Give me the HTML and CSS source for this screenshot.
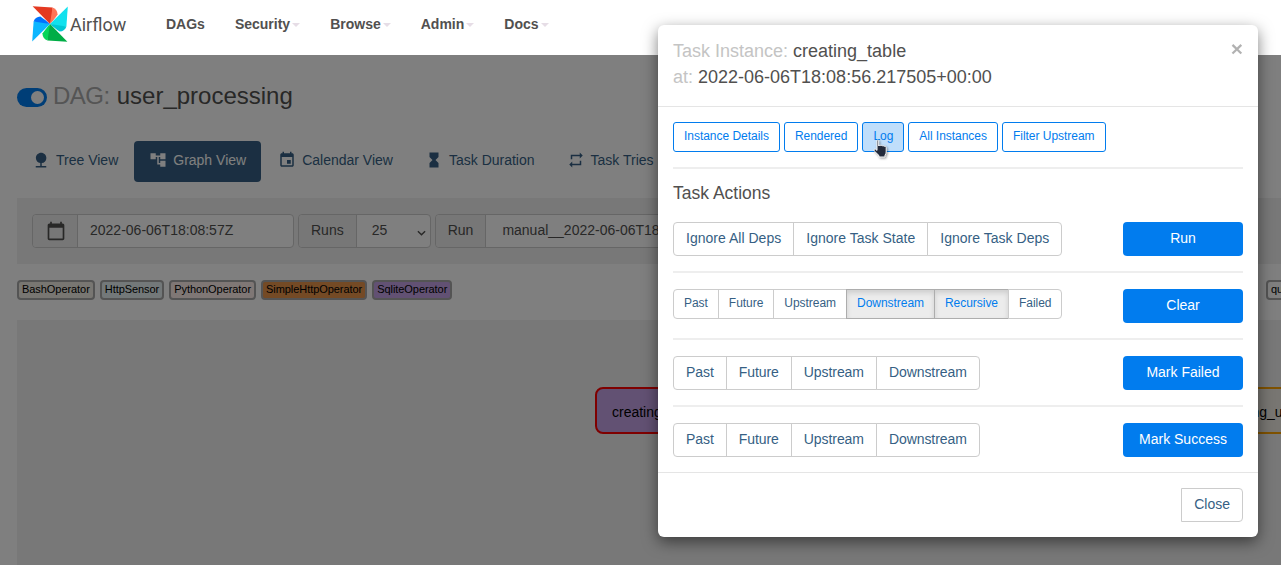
FILE: index.html
```html
<!DOCTYPE html>
<html>
<head>
  <title>Airflow - user_processing</title>
  <link rel="stylesheet" href="styles.css">
</head>
<body>
  <nav class="navbar">
    <a class="brand">
      <svg class="brand-logo" viewBox="0 0 36 36" width="36" height="36">
        <g>
          <path fill="#e43921" d="M18 18L0.6 0.2 20.5 1.6C21.5 6 20 13 18 18z"/>
          <path fill="#ff7557" d="M18 18L20.5 1.6C23.5 2.4 25.4 5 25.6 8.4 23 12 20.5 15.4 18 18z"/>
        </g>
        <g transform="rotate(90 18 18)">
          <path fill="#11e1ee" d="M18 18L0.6 0.2 20.5 1.6C21.5 6 20 13 18 18z"/>
          <path fill="#00c7d4" d="M18 18L20.5 1.6C23.5 2.4 25.4 5 25.6 8.4 23 12 20.5 15.4 18 18z"/>
        </g>
        <g transform="rotate(180 18 18)">
          <path fill="#00ad46" d="M18 18L0.6 0.2 20.5 1.6C21.5 6 20 13 18 18z"/>
          <path fill="#04d659" d="M18 18L20.5 1.6C23.5 2.4 25.4 5 25.6 8.4 23 12 20.5 15.4 18 18z"/>
        </g>
        <g transform="rotate(270 18 18)">
          <path fill="#0cb6ff" d="M18 18L0.6 0.2 20.5 1.6C21.5 6 20 13 18 18z"/>
          <path fill="#0073ff" d="M18 18L20.5 1.6C23.5 2.4 25.4 5 25.6 8.4 23 12 20.5 15.4 18 18z"/>
        </g>
      </svg>
      <span class="brand-name">Airflow</span>
    </a>
    <a class="nav-link">DAGs</a>
    <a class="nav-link">Security<span class="caret"></span></a>
    <a class="nav-link">Browse<span class="caret"></span></a>
    <a class="nav-link">Admin<span class="caret"></span></a>
    <a class="nav-link">Docs<span class="caret"></span></a>
  </nav>

  <div class="container">
    <h2 class="dag-title">
      <span class="toggle"><span class="toggle-knob"></span></span>
      <span class="muted">DAG:</span>
      <span class="dag-name">user_processing</span>
    </h2>

    <ul class="tabs">
      <li class="tab tab-first">
        <svg class="tab-icon" viewBox="0 0 24 24"><path d="M13 16.12c3.47-.41 6.17-3.36 6.17-6.95 0-3.87-3.13-7-7-7s-7 3.13-7 7c0 3.47 2.52 6.34 5.83 6.89V20H5v2h14v-2h-6v-3.88z"/></svg>
        <span>Tree View</span>
      </li>
      <li class="tab tab-active">
        <svg class="tab-icon" viewBox="0 0 24 24"><path d="M22 11V3h-7v3H9V3H2v8h7V8h2v10h4v3h7v-8h-7v3h-2V8h2v3z"/></svg>
        <span>Graph View</span>
      </li>
      <li class="tab">
        <svg class="tab-icon" viewBox="0 0 24 24"><path d="M17 12h-5v5h5v-5zM16 1v2H8V1H6v2H5c-1.11 0-1.99.9-1.99 2L3 19c0 1.1.89 2 2 2h14c1.1 0 2-.9 2-2V5c0-1.1-.9-2-2-2h-1V1h-2zm3 18H5V8h14v11z"/></svg>
        <span>Calendar View</span>
      </li>
      <li class="tab">
        <svg class="tab-icon" viewBox="0 0 24 24"><path d="M6 2v6h.01L6 8.01 10 12l-4 4 .01.01H6V22h12v-5.99h-.01L18 16l-4-4 4-3.99-.01-.01H18V2H6z"/></svg>
        <span>Task Duration</span>
      </li>
      <li class="tab">
        <svg class="tab-icon" viewBox="0 0 24 24"><path d="M7 7h10v3l4-4-4-4v3H5v6h2V7zm10 10H7v-3l-4 4 4 4v-3h12v-6h-2v4z"/></svg>
        <span>Task Tries</span>
      </li>
    </ul>

    <div class="filter-bar">
      <div class="input-group">
        <span class="addon addon-icon">
          <svg viewBox="0 0 24 24" width="20" height="20"><path d="M20 3h-1V1h-2v2H7V1H5v2H4c-1.1 0-2 .9-2 2v16c0 1.1.9 2 2 2h16c1.1 0 2-.9 2-2V5c0-1.1-.9-2-2-2zm0 18H4V8h16v13z"/></svg>
        </span>
        <span class="field field-date">2022-06-06T18:08:57Z</span>
      </div>
      <div class="input-group">
        <span class="addon">Runs</span>
        <span class="field field-select">25
          <svg class="select-arrow" viewBox="0 0 10 6" width="9" height="6"><path d="M1 1l4 4 4-4" fill="none" stroke="#51504f" stroke-width="1.6"/></svg>
        </span>
      </div>
      <div class="input-group">
        <span class="addon">Run</span>
        <span class="field field-run">manual__2022-06-06T18:08:56.217505+00:00</span>
      </div>
    </div>

    <div class="legend">
      <div class="legend-group">
        <span class="op op-bash">BashOperator</span>
        <span class="op op-http">HttpSensor</span>
        <span class="op op-python">PythonOperator</span>
        <span class="op op-simple">SimpleHttpOperator</span>
        <span class="op op-sqlite">SqliteOperator</span>
      </div>
      <div class="legend-states">
        <span class="op">queued</span>
      </div>
    </div>

    <div class="graph">
      <div class="node node-creating">creating_table</div>
      <div class="node node-storing">storing_user</div>
    </div>
  </div>

  <div class="backdrop"></div>

  <div class="modal">
    <div class="modal-header">
      <div class="modal-title">
        <div><span class="title-muted">Task Instance:</span> creating_table</div>
        <div><span class="title-muted">at:</span> 2022-06-06T18:08:56.217505+00:00</div>
      </div>
      <span class="modal-close">×</span>
    </div>

    <div class="modal-body">
      <div class="link-row">
        <a class="btn-link">Instance Details</a>
        <a class="btn-link">Rendered</a>
        <a class="btn-link btn-hover">Log</a>
        <a class="btn-link">All Instances</a>
        <a class="btn-link">Filter Upstream</a>
      </div>
      <hr class="rule rule-top">
      <h4 class="actions-title">Task Actions</h4>

      <div class="action-row">
        <div class="btn-group btn-group-wide">
          <a class="btn">Ignore All Deps</a>
          <a class="btn">Ignore Task State</a>
          <a class="btn">Ignore Task Deps</a>
        </div>
        <a class="btn-primary">Run</a>
      </div>
      <hr class="rule">

      <div class="action-row">
        <div class="btn-group btn-group-sm">
          <a class="btn">Past</a>
          <a class="btn">Future</a>
          <a class="btn">Upstream</a>
          <a class="btn btn-active">Downstream</a>
          <a class="btn btn-active">Recursive</a>
          <a class="btn">Failed</a>
        </div>
        <a class="btn-primary">Clear</a>
      </div>
      <hr class="rule">

      <div class="action-row">
        <div class="btn-group btn-group-tight">
          <a class="btn">Past</a>
          <a class="btn">Future</a>
          <a class="btn">Upstream</a>
          <a class="btn">Downstream</a>
        </div>
        <a class="btn-primary">Mark Failed</a>
      </div>
      <hr class="rule">

      <div class="action-row">
        <div class="btn-group btn-group-tight">
          <a class="btn">Past</a>
          <a class="btn">Future</a>
          <a class="btn">Upstream</a>
          <a class="btn">Downstream</a>
        </div>
        <a class="btn-primary">Mark Success</a>
      </div>
    </div>

    <div class="modal-footer">
      <a class="btn btn-close">Close</a>
    </div>
  </div>

  <!-- mouse pointer sitting on the Log button -->
  <svg class="pointer" viewBox="0 0 16 19" width="16" height="19">
    <path fill="#232a3a" stroke="#fff" stroke-width="1" stroke-linejoin="round" d="M4 1.6c0-.9 1.7-.9 1.7 0V7l.6-.6c.6-.4 1.2-.2 1.6.2.6-.4 1.3-.2 1.6.3.7-.3 1.3-.1 1.7.4.8-.3 2 0 2 1.2v4.5c0 1.2-.5 2.2-1.2 3.2V18H6v-1.4L1.3 12c-1-1.2.3-2.6 1.5-1.7L4 11.4z"/>
  </svg>
</body>
</html>
```

FILE: styles.css
```css
html, body {
  height: 100%;
  overflow: hidden;
}

body {
  margin: 0;
  font-family: "Liberation Sans", Arial, sans-serif;
  font-size: 14px;
  color: #51504f;
  background-color: #fff;
}

/* top bar stays above the backdrop */
.navbar {
  position: relative;
  z-index: 3;
  display: flex;
  align-items: center;
  height: 55px;
  padding-left: 32px;
  background-color: #fff;
  box-sizing: border-box;
}

.brand {
  display: flex;
  align-items: center;
  width: 119px;
  height: 46px;
  margin-top: -7px;
}

.brand-logo {
  flex: none;
}

.brand-name {
  margin-left: 2px;
  font-family: Roboto, sans-serif;
  font-size: 18px;
  color: #51504f;
}

.nav-link {
  padding: 0 15px;
  font-weight: bold;
  font-size: 14px;
  margin-top: -7px;
}

.caret {
  display: inline-block;
  margin-left: 2px;
  vertical-align: middle;
  border-top: 4px solid #e6dde6;
  border-left: 4px solid transparent;
  border-right: 4px solid transparent;
}

.container {
  padding-left: 17px;
}

.dag-title {
  display: flex;
  align-items: center;
  gap: 6px;
  margin: 0;
  padding-top: 26px;
  height: 30px;
  font-size: 24px;
  font-weight: normal;
  line-height: 30px;
  white-space: nowrap;
}

.muted {
  color: #aaa;
  letter-spacing: -0.5px;
}

.dag-name {
  margin-left: 1px;
}

.toggle {
  display: flex;
  justify-content: flex-end;
  align-items: center;
  width: 30px;
  height: 19px;
  margin-top: 3px;
  padding-right: 3px;
  box-sizing: border-box;
  border-radius: 10px;
  background-color: #017cee;
}

.toggle-knob {
  width: 13px;
  height: 13px;
  border-radius: 50%;
  background-color: #fff;
}

.tabs {
  display: flex;
  gap: 2px;
  margin: 30px 0 16px;
  padding: 0;
  list-style: none;
}

.tab {
  display: flex;
  align-items: center;
  gap: 6px;
  height: 41px;
  padding: 0 15px 3px;
  box-sizing: border-box;
  border-radius: 4px;
  color: #365f84;
  white-space: nowrap;
}

.tab-first {
  padding-right: 14px;
}

.tab-icon {
  width: 18px;
  height: 18px;
  fill: #365f84;
}

.tab-active {
  background-color: #365f84;
  color: #fff;
}

.tab-active .tab-icon {
  fill: #fff;
}

.filter-bar {
  display: flex;
  gap: 4px;
  height: 66px;
  padding: 16px 15px;
  box-sizing: border-box;
  background-color: #f0f0f0;
  white-space: nowrap;
}

.input-group {
  display: flex;
  height: 34px;
  border: 1px solid #ccc;
  border-radius: 4px;
  box-sizing: border-box;
  background-color: #fff;
}

.addon {
  display: flex;
  align-items: center;
  padding: 0 12px 2px;
  border-right: 1px solid #ccc;
  background-color: #eee;
  border-radius: 4px 0 0 4px;
}

.addon-icon {
  width: 45px;
  box-sizing: border-box;
  padding: 0 13px;
}

.addon-icon svg {
  fill: #51504f;
  flex: none;
}

.field {
  display: flex;
  align-items: center;
  padding: 0 12px 2px;
}

.field-date {
  width: 191px;
}

.field-select {
  justify-content: space-between;
  width: 54px;
  padding-right: 4px;
  padding-left: 15px;
}

.select-arrow {
  margin-top: 5px;
}

.field-run {
  padding-left: 16px;
  width: 400px;
}

.legend {
  display: flex;
  justify-content: space-between;
  height: 20px;
  margin: 16px 0 20px;
}

.legend-group {
  display: flex;
  gap: 5px;
}

.legend-states {
  width: 15px;
  white-space: nowrap;
}

.op {
  display: inline-block;
  height: 20px;
  padding: 0 3px;
  box-sizing: border-box;
  border: 2px solid #a8a8a8;
  border-radius: 4px;
  font-size: 11px;
  line-height: 15px;
  letter-spacing: -0.06px;
  color: #000;
  background-color: #fff;
}

.op-bash {
  background-color: #f0ede4;
}

.op-http {
  background-color: #e6f1f2;
}

.op-python {
  background-color: #ffefeb;
}

.op-simple {
  background-color: #e8944a;
}

.op-sqlite {
  background-color: #c4a3e6;
}

.graph {
  position: relative;
  height: 245px;
  background-color: #f0f0f0;
}

/* graph nodes sit on a free canvas */
.node {
  position: absolute;
  top: 67px;
  height: 47px;
  padding: 0 15px;
  box-sizing: border-box;
  border-radius: 8px;
  line-height: 47px;
  color: #000;
  white-space: nowrap;
}

.node-creating {
  left: 578px;
  border: 2px solid #ff0000;
  background-color: #c4a3e6;
}

.node-storing {
  left: 1191px;
  border: 2px solid #ffa500;
  background-color: #f0ede4;
}

.backdrop {
  position: absolute;
  top: 0;
  left: 0;
  right: 0;
  bottom: 0;
  z-index: 2;
  background-color: rgba(0, 0, 0, 0.5);
}

.modal {
  position: absolute;
  top: 25px;
  left: 658px;
  z-index: 4;
  width: 600px;
  height: 512px;
  box-sizing: border-box;
  border-radius: 6px;
  background-color: #fff;
  box-shadow: 0 5px 15px rgba(0, 0, 0, 0.5);
}

.modal-header {
  display: flex;
  justify-content: space-between;
  height: 82px;
  padding: 13px 15px 0;
  box-sizing: border-box;
  border-bottom: 1px solid #e5e5e5;
}

.modal-title {
  font-size: 18px;
  line-height: 26px;
}

.title-muted {
  color: #c4c4c4;
}

.modal-close {
  font-size: 21px;
  font-weight: bold;
  line-height: 21px;
  color: #000;
  opacity: 0.3;
}

.modal-body {
  padding: 15px 15px 0;
}

.link-row {
  display: flex;
  gap: 4px;
  letter-spacing: -0.03px;
}

.btn-link {
  padding: 4px 10px 6px;
  border: 1px solid #017cee;
  border-radius: 3px;
  font-size: 12px;
  line-height: 18px;
  color: #017cee;
  background-color: #fff;
}

.btn-hover {
  background-color: #bfdefb;
}

.rule {
  height: 2px;
  margin: 15px 0 16px;
  border: 0;
  background-color: #eee;
}

.rule-top {
  margin-bottom: 14px;
}

.actions-title {
  margin: 0 0 19px;
  font-size: 17.5px;
  font-weight: normal;
  line-height: 20px;
}

.action-row {
  display: flex;
  justify-content: space-between;
  align-items: flex-start;
  height: 34px;
}

.btn-group {
  display: flex;
}

.btn-group-wide {
  letter-spacing: 0.02px;
}

.btn-group-tight {
  letter-spacing: -0.07px;
}

.btn {
  padding: 5px 12px 7px;
  border: 1px solid #ccc;
  margin-left: -1px;
  font-size: 14px;
  line-height: 20px;
  color: #365f84;
  background-color: #fff;
}

.btn:first-child {
  margin-left: 0;
  border-radius: 4px 0 0 4px;
}

.btn:last-child {
  border-radius: 0 4px 4px 0;
}

.btn-group-sm {
  letter-spacing: -0.04px;
}

.btn-group-sm .btn {
  padding: 4px 10px 6px;
  font-size: 12px;
  line-height: 18px;
}

.btn-group-sm .btn-active {
  border-color: #adadad;
  color: #017cee;
  background-color: #ececec;
  box-shadow: inset 0 3px 5px rgba(0, 0, 0, 0.125);
}

.btn-primary {
  width: 120px;
  box-sizing: border-box;
  padding: 6px 0 8px;
  border-radius: 4px;
  font-size: 14px;
  line-height: 20px;
  text-align: center;
  color: #fff;
  background-color: #017cee;
}

.modal-footer {
  display: flex;
  justify-content: flex-end;
  margin-top: 15px;
  padding: 15px;
  border-top: 1px solid #e5e5e5;
}

.btn-close {
  border-radius: 4px;
}

.pointer {
  position: absolute;
  top: 139px;
  left: 873px;
  z-index: 5;
  filter: drop-shadow(1px 1px 1px rgba(0, 0, 0, 0.4));
}
```
